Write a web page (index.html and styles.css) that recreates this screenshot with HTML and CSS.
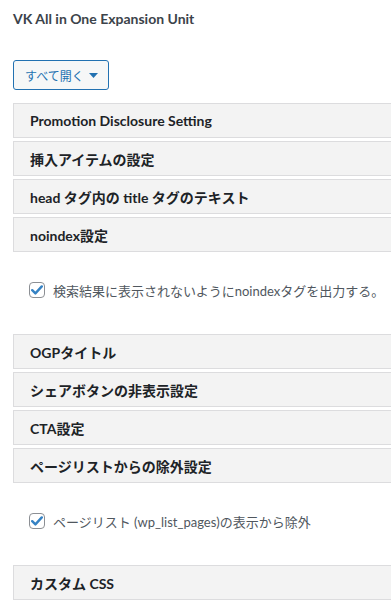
FILE: index.html
```html
<!DOCTYPE html>
<html lang="ja">
<head>
    <meta charset="UTF-8">
    <meta name="viewport" content="width=device-width, initial-scale=1.0">
    <title>VK All in One Expansion Unit</title>
    <link rel="stylesheet" href="styles.css">
</head>
<body>
    <div id="vk-wrap">
        <h1 class="page-title">VK All in One Expansion Unit</h1>

        <button type="button" class="open-all">
            すべて開く
            <svg width="9" height="5" viewBox="0 0 9 5"><path d="M0 0h9L4.5 5z" fill="#2271b1"/></svg>
        </button>

        <div class="metaboxes">
            <div class="postbox"><h2>Promotion Disclosure Setting</h2></div>
            <div class="postbox"><h2>挿入アイテムの設定</h2></div>
            <div class="postbox"><h2>head タグ内の title タグのテキスト</h2></div>
            <div class="postbox"><h2>noindex設定</h2></div>
            <div class="inside">
                <label class="check-row">
                    <span class="check-box"><svg width="12" height="10" viewBox="0 0 12 10"><path d="M1.2 5.2l3.2 3.2L10.8 1.4" fill="none" stroke="#3582c4" stroke-width="2.4" stroke-linecap="round" stroke-linejoin="round"/></svg></span>
                    検索結果に表示されないようにnoindexタグを出力する。
                </label>
            </div>
            <div class="postbox"><h2>OGPタイトル</h2></div>
            <div class="postbox"><h2>シェアボタンの非表示設定</h2></div>
            <div class="postbox"><h2>CTA設定</h2></div>
            <div class="postbox"><h2>ページリストからの除外設定</h2></div>
            <div class="inside">
                <label class="check-row">
                    <span class="check-box"><svg width="12" height="10" viewBox="0 0 12 10"><path d="M1.2 5.2l3.2 3.2L10.8 1.4" fill="none" stroke="#3582c4" stroke-width="2.4" stroke-linecap="round" stroke-linejoin="round"/></svg></span>
                    ページリスト (wp_list_pages)の表示から除外
                </label>
            </div>
            <div class="postbox"><h2>カスタム CSS</h2></div>
        </div>
    </div>
</body>
</html>
```

FILE: styles.css
```css
* {
    box-sizing: border-box;
    margin: 0;
    padding: 0;
}
html, body {
    background: #ffffff;
    overflow: hidden;
    font-family: Lato, "Noto Sans CJK JP", sans-serif;
    color: #1d2327;
}
#vk-wrap {
    padding: 8px 0 0 13px;
}
.page-title {
    font-size: 14px;
    font-weight: 700;
    line-height: 22px;
    color: #3c434a;
}
.open-all {
    display: flex;
    align-items: center;
    gap: 5px;
    margin-top: 30px;
    height: 30px;
    padding: 0 10px 0 11px;
    border: 1px solid #2271b1;
    border-radius: 3px;
    background-color: #f6f7f7;
    color: #2271b1;
    font-family: inherit;
    font-size: 12px;
}
.metaboxes {
    margin-top: 13px;
    margin-right: -10px;
}
.postbox {
    height: 35px;
    margin-bottom: 3px;
    border: 1px solid #dcdcde;
    background-color: #f3f3f3;
    display: flex;
    align-items: center;
    padding-left: 16px;
}
.postbox h2 {
    font-size: 14px;
    font-weight: 700;
    color: #1d2327;
}
.inside {
    padding: 27px 16px 36px;
}
.check-row {
    display: flex;
    align-items: center;
    gap: 8px;
    height: 16px;
    font-size: 13px;
    white-space: nowrap;
    color: #50575e;
}
.check-box {
    flex-shrink: 0;
    width: 16px;
    height: 16px;
    border: 1px solid #8c8f94;
    border-radius: 4px;
    background: #ffffff;
    display: flex;
    align-items: center;
    justify-content: center;
}
```
